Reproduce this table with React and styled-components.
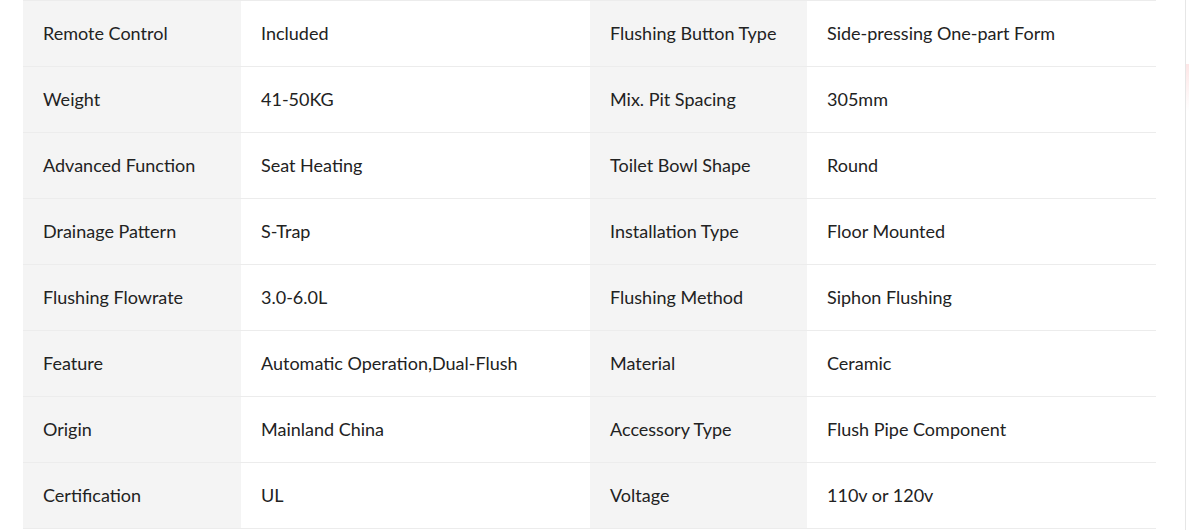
import React from "react";
import styled, { createGlobalStyle } from "styled-components";

const SPECS = [
  ["Remote Control", "Included", "Flushing Button Type", "Side-pressing One-part Form"],
  ["Weight", "41-50KG", "Mix. Pit Spacing", "305mm"],
  ["Advanced Function", "Seat Heating", "Toilet Bowl Shape", "Round"],
  ["Drainage Pattern", "S-Trap", "Installation Type", "Floor Mounted"],
  ["Flushing Flowrate", "3.0-6.0L", "Flushing Method", "Siphon Flushing"],
  ["Feature", "Automatic Operation,Dual-Flush", "Material", "Ceramic"],
  ["Origin", "Mainland China", "Accessory Type", "Flush Pipe Component"],
  ["Certification", "UL", "Voltage", "110v or 120v"],
];

const App = () => {
  return (
    <>
      <GlobalStyle />
      <Page>
        <Main>
          <SpecTable>
            {SPECS.map((row, i) => (
              <Row key={i}>
                <Cell $label>{row[0]}</Cell>
                <Cell>{row[1]}</Cell>
                <Cell $label>{row[2]}</Cell>
                <Cell>{row[3]}</Cell>
              </Row>
            ))}
          </SpecTable>
        </Main>
        <SideRail>
          <RailMark />
        </SideRail>
      </Page>
    </>
  );
};

export default App;

const GlobalStyle = createGlobalStyle`
  body {
    margin: 0;
    background: #fff;
    font-family: "Lato", "Liberation Sans", sans-serif;
  }
`;

const Page = styled.div`
  display: flex;
  width: 1189px;
  height: 530px;
  overflow: hidden;
`;

// main content column, ends with the thin line at the right
const Main = styled.div`
  width: 1186px;
  border-right: 1px solid #e6e6e6;
  padding-left: 23px;
  box-sizing: border-box;
`;

const SideRail = styled.div`
  flex: 1;
  padding-top: 64px;
`;

const RailMark = styled.div`
  height: 48px;
  background: linear-gradient(#fde6e6, #fff);
`;

const SpecTable = styled.div`
  width: 1133px;
  border-top: 1px solid #ececec;
`;

const Row = styled.div`
  display: grid;
  grid-template-columns: 218px 349px 217px 349px;
  height: 66px;
  border-bottom: 1px solid #ececec;
  box-sizing: border-box;
`;

const Cell = styled.div`
  display: flex;
  align-items: center;
  padding-left: 20px;
  padding-bottom: 2px;
  background: ${(p) => (p.$label ? "#f4f4f4" : "#fff")};
  font-size: 18px;
  color: #222;
  white-space: nowrap;
`;
